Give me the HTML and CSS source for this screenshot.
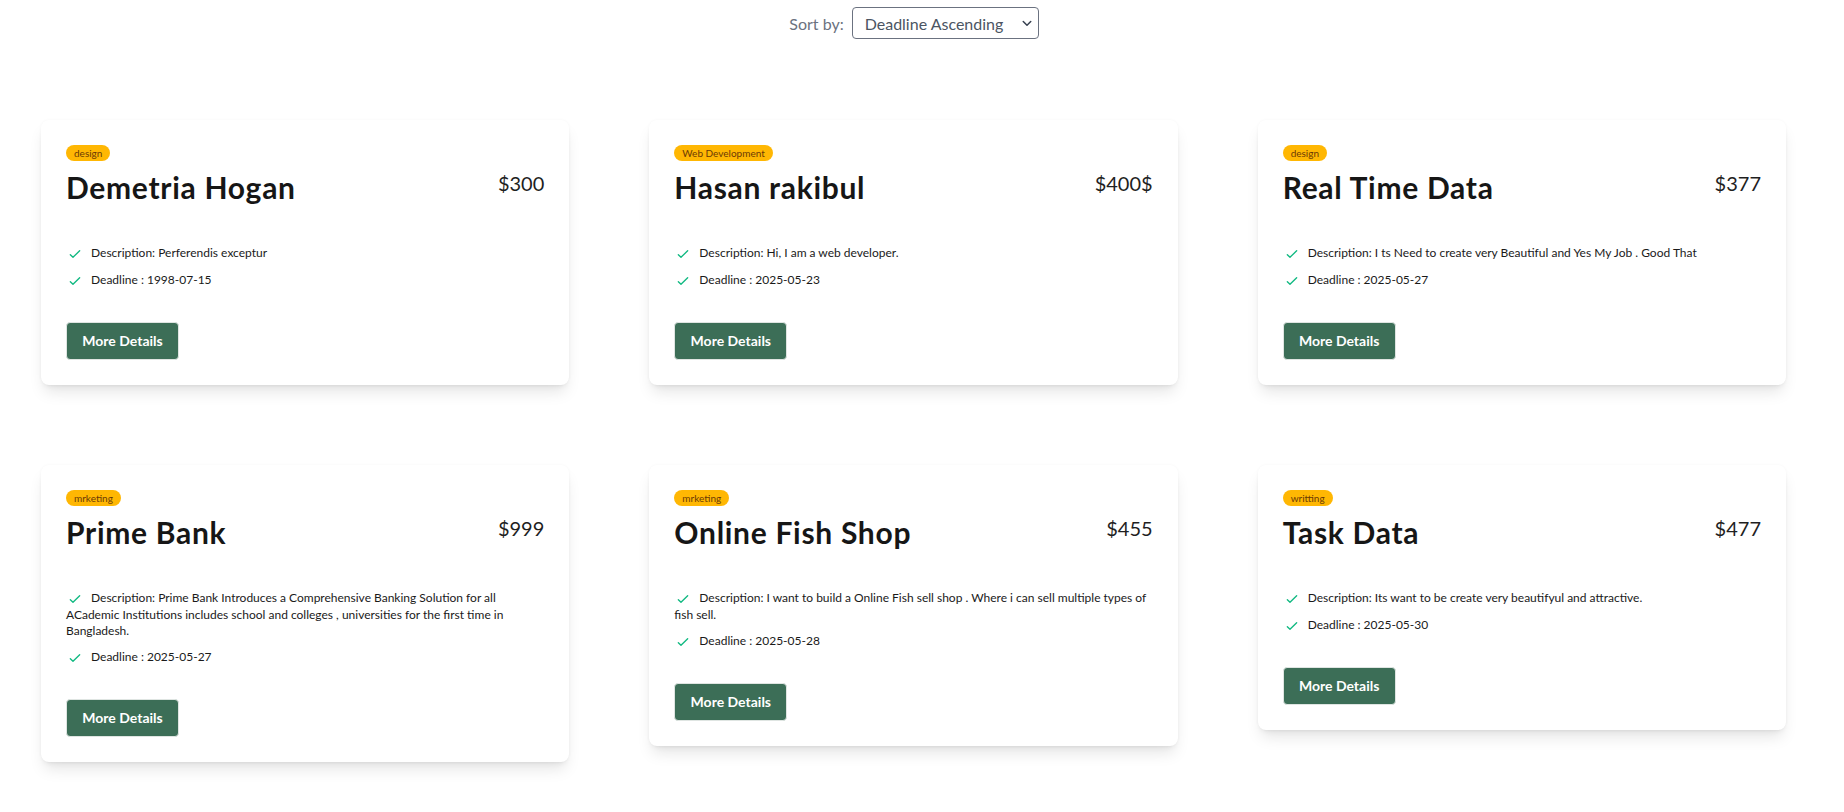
FILE: index.html
```html
<!DOCTYPE html>
<html lang="en">
<head>
<meta charset="utf-8">
<title>Tasks</title>
<link rel="stylesheet" href="styles.css">
</head>
<body>
<div class="page">
  <div class="sort-bar">
    <label class="sort-label" for="sort">Sort by:</label>
    <div class="select-wrap">
      <select id="sort" class="sort-select">
        <option>Deadline Ascending</option>
        <option>Deadline Descending</option>
      </select>
      <svg class="chevron" viewBox="0 0 16 16" width="12" height="12"><path d="M3 6l5 5 5-5" fill="none" stroke="#374151" stroke-width="2" stroke-linecap="round" stroke-linejoin="round"/></svg>
    </div>
  </div>

  <main class="grid">
    <article class="card">
      <span class="badge">design</span>
      <div class="card-head">
        <h2 class="title">Demetria Hogan</h2>
        <span class="price">$300</span>
      </div>
      <ul class="facts">
        <li><svg class="check" viewBox="0 0 24 24"><path d="M5 13l4 4L19 7"/></svg>Description: Perferendis exceptur</li>
        <li><svg class="check" viewBox="0 0 24 24"><path d="M5 13l4 4L19 7"/></svg>Deadline : 1998-07-15</li>
      </ul>
      <button class="btn">More Details</button>
    </article>

    <article class="card">
      <span class="badge">Web Development</span>
      <div class="card-head">
        <h2 class="title">Hasan rakibul</h2>
        <span class="price">$400$</span>
      </div>
      <ul class="facts">
        <li><svg class="check" viewBox="0 0 24 24"><path d="M5 13l4 4L19 7"/></svg>Description: Hi, I am a web developer.</li>
        <li><svg class="check" viewBox="0 0 24 24"><path d="M5 13l4 4L19 7"/></svg>Deadline : 2025-05-23</li>
      </ul>
      <button class="btn">More Details</button>
    </article>

    <article class="card">
      <span class="badge">design</span>
      <div class="card-head">
        <h2 class="title">Real Time Data</h2>
        <span class="price">$377</span>
      </div>
      <ul class="facts">
        <li><svg class="check" viewBox="0 0 24 24"><path d="M5 13l4 4L19 7"/></svg>Description: I ts Need to create very Beautiful and Yes My Job . Good That</li>
        <li><svg class="check" viewBox="0 0 24 24"><path d="M5 13l4 4L19 7"/></svg>Deadline : 2025-05-27</li>
      </ul>
      <button class="btn">More Details</button>
    </article>

    <article class="card">
      <span class="badge">mrketing</span>
      <div class="card-head">
        <h2 class="title">Prime Bank</h2>
        <span class="price">$999</span>
      </div>
      <ul class="facts">
        <li><svg class="check" viewBox="0 0 24 24"><path d="M5 13l4 4L19 7"/></svg>Description: Prime Bank Introduces a Comprehensive Banking Solution for all ACademic Institutions includes school and colleges , universities for the first time in Bangladesh.</li>
        <li><svg class="check" viewBox="0 0 24 24"><path d="M5 13l4 4L19 7"/></svg>Deadline : 2025-05-27</li>
      </ul>
      <button class="btn">More Details</button>
    </article>

    <article class="card">
      <span class="badge">mrketing</span>
      <div class="card-head">
        <h2 class="title">Online Fish Shop</h2>
        <span class="price">$455</span>
      </div>
      <ul class="facts">
        <li><svg class="check" viewBox="0 0 24 24"><path d="M5 13l4 4L19 7"/></svg>Description: I want to build a Online Fish sell shop . Where i can sell multiple types of fish sell.</li>
        <li><svg class="check" viewBox="0 0 24 24"><path d="M5 13l4 4L19 7"/></svg>Deadline : 2025-05-28</li>
      </ul>
      <button class="btn">More Details</button>
    </article>

    <article class="card">
      <span class="badge">writting</span>
      <div class="card-head">
        <h2 class="title">Task Data</h2>
        <span class="price">$477</span>
      </div>
      <ul class="facts">
        <li><svg class="check" viewBox="0 0 24 24"><path d="M5 13l4 4L19 7"/></svg>Description: Its want to be create very beautifyul and attractive.</li>
        <li><svg class="check" viewBox="0 0 24 24"><path d="M5 13l4 4L19 7"/></svg>Deadline : 2025-05-30</li>
      </ul>
      <button class="btn">More Details</button>
    </article>
  </main>
</div>
</body>
</html>
```

FILE: styles.css
```css
* { box-sizing: border-box; }

html, body {
  margin: 0;
  padding: 0;
  background: #ffffff;
}

body {
  font-family: "Segoe UI", "Lato", "Open Sans", sans-serif;
  color: #1a1a1a;
}

.page {
  width: 1827px;
  padding-top: 7px;
  padding-bottom: 40px;
}

.sort-bar {
  display: flex;
  justify-content: center;
  align-items: center;
  gap: 8px;
  padding-left: 1px;
}

.sort-label {
  font-size: 16px;
  color: #6b7280;
}

.select-wrap {
  position: relative;
  display: inline-flex;
}

.sort-select {
  appearance: none;
  -webkit-appearance: none;
  width: 187px;
  height: 32px;
  padding: 0 24px 0 12px;
  border: 1px solid #6b7280;
  border-radius: 4px;
  background: #ffffff;
  font-family: inherit;
  font-size: 16px;
  color: #4b5563;
}

.chevron {
  position: absolute;
  right: 6px;
  top: 10px;
  pointer-events: none;
}

.grid {
  width: 1745px;
  margin: 81px auto 0;
  display: grid;
  grid-template-columns: repeat(3, 1fr);
  column-gap: 80px;
  row-gap: 80px;
  align-items: start;
}

.card {
  background: #ffffff;
  border-radius: 8px;
  padding: 25px;
  box-shadow: 0 10px 15px -3px rgba(0, 0, 0, 0.1), 0 4px 6px -4px rgba(0, 0, 0, 0.1), 0 0 3px rgba(0, 0, 0, 0.04);
}

.badge {
  display: block;
  width: fit-content;
  background: #ffb703;
  color: #6b3a05;
  font-size: 10px;
  line-height: 16px;
  height: 16px;
  padding: 0 8px;
  border-radius: 999px;
}

.card-head {
  display: flex;
  justify-content: space-between;
  align-items: flex-start;
  margin-top: 8px;
}

.title {
  margin: 0;
  font-size: 30px;
  line-height: 36px;
  font-weight: 700;
  letter-spacing: 0.7px;
  color: #161616;
}

.price {
  font-size: 20px;
  line-height: 28px;
  color: #1f1f1f;
}

.facts {
  list-style: none;
  margin: 40px 0 0;
  padding: 0;
  font-size: 12px;
  line-height: 16px;
  color: #1a1a1a;
}

.facts li + li {
  margin-top: 10px;
}

.check {
  width: 16px;
  height: 16px;
  margin-right: 8px;
  margin-left: 1px;
  vertical-align: middle;
  fill: none;
  stroke: #10b981;
  stroke-width: 2;
  stroke-linecap: round;
  stroke-linejoin: round;
}

.btn {
  display: block;
  margin-top: 33px;
  width: 113px;
  height: 38px;
  padding: 0;
  background: #3c6e57;
  color: #ffffff;
  border: 1px solid #dfe5e2;
  border-radius: 4px;
  font-family: inherit;
  font-size: 14px;
  font-weight: 700;
  cursor: pointer;
}
```
